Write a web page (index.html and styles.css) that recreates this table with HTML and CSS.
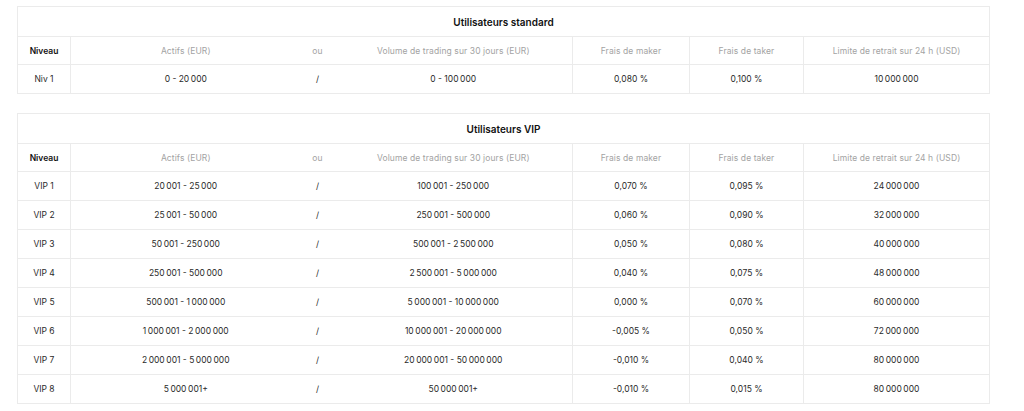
FILE: index.html
```html
<!DOCTYPE html>
<html lang="fr">
<head>
  <meta charset="UTF-8" />
  <title>Frais de trading</title>
  <link rel="stylesheet" href="styles.css">
</head>
<body>

  <table class="fees">
    <colgroup>
      <col class="c-level"><col class="c-assets"><col class="c-or"><col class="c-volume">
      <col class="c-maker"><col class="c-taker"><col class="c-limit">
    </colgroup>
    <tr class="title"><th colspan="7">Utilisateurs standard</th></tr>
    <tr class="head">
      <th class="level sep">Niveau</th>
      <th>Actifs (EUR)</th>
      <th>ou</th>
      <th class="sep">Volume de trading sur 30 jours (EUR)</th>
      <th class="sep">Frais de maker</th>
      <th class="sep">Frais de taker</th>
      <th>Limite de retrait sur 24 h (USD)</th>
    </tr>
    <tr>
      <td class="sep">Niv 1</td><td>0 - 20&#8239;000</td><td>/</td><td class="sep">0 - 100&#8239;000</td>
      <td class="sep">0,080 %</td><td class="sep">0,100 %</td><td>10&#8239;000&#8239;000</td>
    </tr>
  </table>

  <table class="fees">
    <colgroup>
      <col class="c-level"><col class="c-assets"><col class="c-or"><col class="c-volume">
      <col class="c-maker"><col class="c-taker"><col class="c-limit">
    </colgroup>
    <tr class="title"><th colspan="7">Utilisateurs VIP</th></tr>
    <tr class="head">
      <th class="level sep">Niveau</th>
      <th>Actifs (EUR)</th>
      <th>ou</th>
      <th class="sep">Volume de trading sur 30 jours (EUR)</th>
      <th class="sep">Frais de maker</th>
      <th class="sep">Frais de taker</th>
      <th>Limite de retrait sur 24 h (USD)</th>
    </tr>
    <tr><td class="sep">VIP 1</td><td>20&#8239;001 - 25&#8239;000</td><td>/</td><td class="sep">100&#8239;001 - 250&#8239;000</td><td class="sep">0,070 %</td><td class="sep">0,095 %</td><td>24&#8239;000&#8239;000</td></tr>
    <tr><td class="sep">VIP 2</td><td>25&#8239;001 - 50&#8239;000</td><td>/</td><td class="sep">250&#8239;001 - 500&#8239;000</td><td class="sep">0,060 %</td><td class="sep">0,090 %</td><td>32&#8239;000&#8239;000</td></tr>
    <tr><td class="sep">VIP 3</td><td>50&#8239;001 - 250&#8239;000</td><td>/</td><td class="sep">500&#8239;001 - 2&#8239;500&#8239;000</td><td class="sep">0,050 %</td><td class="sep">0,080 %</td><td>40&#8239;000&#8239;000</td></tr>
    <tr><td class="sep">VIP 4</td><td>250&#8239;001 - 500&#8239;000</td><td>/</td><td class="sep">2&#8239;500&#8239;001 - 5&#8239;000&#8239;000</td><td class="sep">0,040 %</td><td class="sep">0,075 %</td><td>48&#8239;000&#8239;000</td></tr>
    <tr><td class="sep">VIP 5</td><td>500&#8239;001 - 1&#8239;000&#8239;000</td><td>/</td><td class="sep">5&#8239;000&#8239;001 - 10&#8239;000&#8239;000</td><td class="sep">0,000 %</td><td class="sep">0,070 %</td><td>60&#8239;000&#8239;000</td></tr>
    <tr><td class="sep">VIP 6</td><td>1&#8239;000&#8239;001 - 2&#8239;000&#8239;000</td><td>/</td><td class="sep">10&#8239;000&#8239;001 - 20&#8239;000&#8239;000</td><td class="sep">-0,005 %</td><td class="sep">0,050 %</td><td>72&#8239;000&#8239;000</td></tr>
    <tr><td class="sep">VIP 7</td><td>2&#8239;000&#8239;001 - 5&#8239;000&#8239;000</td><td>/</td><td class="sep">20&#8239;000&#8239;001 - 50&#8239;000&#8239;000</td><td class="sep">-0,010 %</td><td class="sep">0,040 %</td><td>80&#8239;000&#8239;000</td></tr>
    <tr><td class="sep">VIP 8</td><td>5&#8239;000&#8239;001+</td><td>/</td><td class="sep">50&#8239;000&#8239;001+</td><td class="sep">-0,010 %</td><td class="sep">0,015 %</td><td>80&#8239;000&#8239;000</td></tr>
  </table>

</body>
</html>
```

FILE: styles.css
```css
body {
  margin: 0;
  padding: 6px 0 0 17px;
  background: #fff;
  font-family: Inter, 'Noto Sans', sans-serif;
  color: #222;
}

.fees {
  width: 972px;
  table-layout: fixed;
  border-collapse: collapse;
  border: 1px solid #ebebeb;
  margin-bottom: 19px;
}

.c-level { width: 53px; }
.c-assets { width: 230px; }
.c-or { width: 34px; }
.c-volume { width: 238px; }
.c-maker { width: 117px; }
.c-taker { width: 114px; }
.c-limit { width: 186px; }

.fees th,
.fees td {
  padding: 0;
  height: 28px;
  text-align: center;
  border-top: 1px solid #ebebeb;
  font-size: 8.5px;
  font-weight: 400;
  white-space: nowrap;
}

.fees td {
  color: #2a2a2a;
}

.fees .sep {
  border-right: 1px solid #ebebeb;
}

.title th {
  height: 29px;
  font-size: 10px;
  font-weight: 600;
  color: #111;
}

.head th {
  height: 27px;
  color: #a3a3a3;
  font-size: 8.5px;
  letter-spacing: 0.1px;
}

.head th.level {
  color: #111;
  font-weight: 600;
  letter-spacing: 0;
}
```
